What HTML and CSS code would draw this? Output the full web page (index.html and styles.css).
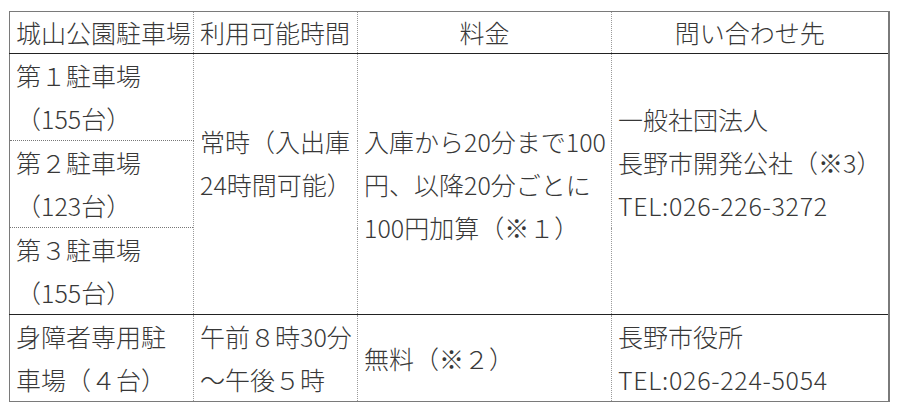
FILE: index.html
```html
<!DOCTYPE html>
<html lang="ja">
<head>
<meta charset="utf-8">
<link rel="stylesheet" href="styles.css">
</head>
<body>
<table class="park">
  <colgroup>
    <col class="c1"><col class="c2"><col class="c3"><col class="c4">
  </colgroup>
  <thead>
    <tr>
      <th class="left">城山公園駐車場</th>
      <th class="left">利用可能時間</th>
      <th>料金</th>
      <th>問い合わせ先</th>
    </tr>
  </thead>
  <tbody>
    <tr>
      <td class="sub">第１駐車場<br>（155台）</td>
      <td rowspan="3" class="mid pad1">常時（入出庫<br>24時間可能）</td>
      <td rowspan="3" class="mid">入庫から20分まで100<br>円、以降20分ごとに<br>100円加算（※１）</td>
      <td rowspan="3" class="mid pad1">一般社団法人<br>長野市開発公社（※3）<br><span class="num">TEL:026-226-3272</span></td>
    </tr>
    <tr>
      <td class="sub">第２駐車場<br>（123台）</td>
    </tr>
    <tr>
      <td class="sub last">第３駐車場<br>（155台）</td>
    </tr>
    <tr class="bottom">
      <td>身障者専用駐<br>車場（４台）</td>
      <td>午前８時30分<br>～午後５時</td>
      <td class="mid">無料（※２）</td>
      <td>長野市役所<br><span class="num">TEL:026-224-5054</span></td>
    </tr>
  </tbody>
</table>
</body>
</html>
```

FILE: styles.css
```css
html, body {
  margin: 0;
  padding: 0;
  background: #ffffff;
}
body {
  padding: 11px 0 0 9px;
  font-family: "Noto Sans CJK JP", "Noto Sans", sans-serif;
  color: #383838;
}
.park {
  border-collapse: collapse;
  table-layout: fixed;
  width: 879px;
  border: 1px solid #7a7a7a;
  border-right: 2px solid #7a7a7a;
  font-size: 25px;
  font-weight: 300;
  line-height: 43px;
}
.c1 { width: 184px; }
.c2 { width: 164px; }
.c3 { width: 254px; }
.c4 { width: 277px; }
.park th, .park td {
  padding: 0 0 0 6px;
  font-weight: 300;
  white-space: nowrap;
  vertical-align: top;
  text-align: left;
  border-left: 1px dotted #9a9a9a;
  border-right: 1px dotted #9a9a9a;
  overflow: hidden;
}
.park th {
  text-align: center;
  height: 41px;
  line-height: 41px;
  vertical-align: middle;
  border-bottom: 1px solid #222222;
  padding: 0;
}
.park th.left {
  text-align: left;
  padding-left: 6px;
}
.park td.sub {
  height: 85px;
  border-bottom: 1px dotted #777777;
}
.park td.sub.last {
  border-bottom: 1px solid #222222;
}
.park td.mid {
  vertical-align: middle;
  border-bottom: 1px solid #222222;
}
.park td.pad1 {
  padding-bottom: 43px;
}
.park tr.bottom td {
  height: 84px;
  border-bottom: 1px solid #7a7a7a;
}
.park tr.bottom td.mid {
  vertical-align: middle;
}
.num {
  letter-spacing: 0.7px;
}
```
